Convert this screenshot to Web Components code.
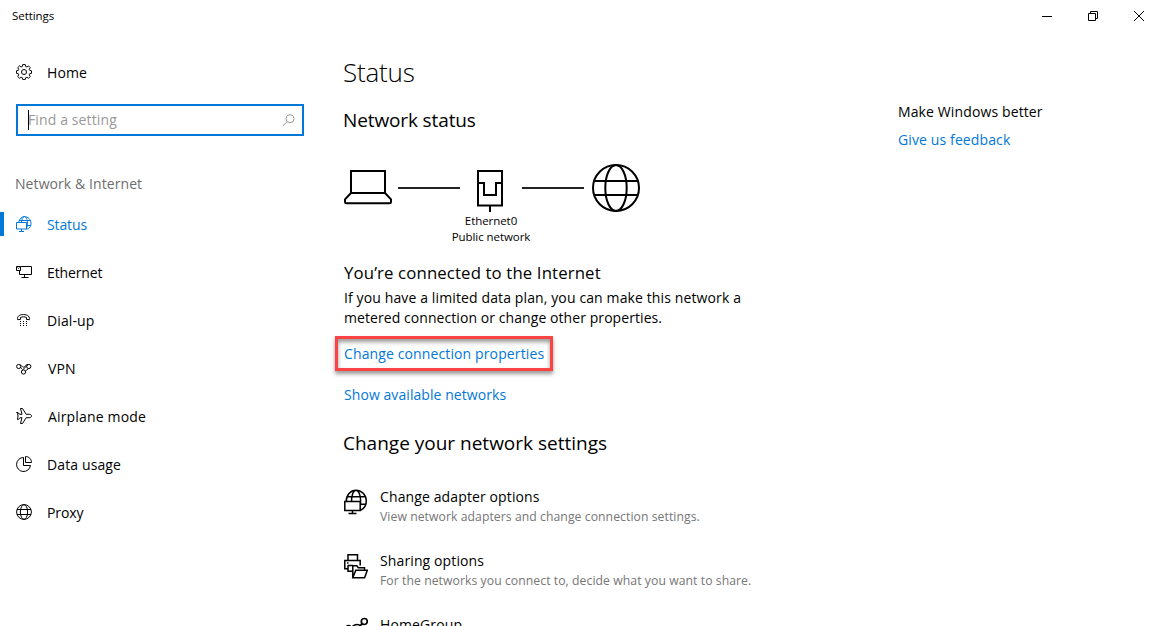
<!DOCTYPE html>
<html lang="en">
<head>
<meta charset="utf-8">
<title>Settings</title>
<style>
  html, body { margin: 0; height: 100%; overflow: hidden; background: #fff; }
</style>
</head>
<body>
<settings-app></settings-app>

<script>
// shared helper: clone a template into an open shadow root
function render(host, html) {
  const template = document.createElement("template");
  template.innerHTML = html;
  host.attachShadow({ mode: "open" });
  host.shadowRoot.appendChild(template.content.cloneNode(true));
}

const icons = {
  gear: [16, 16, `<path stroke-linejoin="round" d="M6.7 .6h2.6l.4 1.9 1.2.5 1.6-1.1 1.8 1.8-1.1 1.6.5 1.1 1.8.4v2.5l-1.8.4-.5 1.2 1.1 1.6-1.8 1.8-1.6-1.1-1.2.5-.4 1.7H6.7l-.4-1.7-1.2-.5-1.6 1.1-1.8-1.8 1.1-1.6-.5-1.2-1.8-.4V6.8l1.8-.4.5-1.1-1.1-1.6 1.8-1.8 1.6 1.1 1.2-.5z"/><circle cx="8" cy="8" r="2.5"/>`],
  status: [16, 16, `<path d="M2.600 6.500C3.400 3 5.600 .6 8.300 .6c3.800 0 6.700 3 6.700 6.700 0 3.200-1.600 5.400-4.500 6.100M3 4.500h11.300M10.500 9.500h4.200M5.400 6.500c.3-3.500 1.400-5.900 3-5.900s3.100 3 3.100 6.700c0 2.200-.2 3.400-1 4.700M.5 6.500h10v6.500H.5zM5.500 13v2.500M3 15.500h5"/>`],
  ethernet: [16, 16, `<path d="M5 2.500h10.500v8H3.500v-4M.5 2.500h4v4h-4zM1.500 3.500l1 1 1-1M8.500 10.500v3M5.500 13.500h7"/>`],
  dialup: [16, 16, `<path d="M1.500 6.500c0-2.600 2.800-4 6-4s6 1.400 6 4l-.2 1.200-2.800-.3V5.500c-1.800-.9-4.200-.9-6 0v1.900l-2.800.3z"/><path stroke-dasharray="1 2" d="M4 9.500h8M4 11.500h8M4 13.500h8"/>`],
  vpn: [16, 16, `<circle cx="2.700" cy="6.500" r="2.100"/><circle cx="12.800" cy="6.500" r="2.100"/><circle cx="7.500" cy="12" r="2.100"/><path d="M4.200 5c1.600.2 2 2.200 3.300 2.200S9.700 4.500 12 4.400M4.600 7.500l1.500 1.200M11.200 5.300L6 10.600M12.500 8.600L9.400 11"/>`],
  airplane: [16, 16, `<path d="M4.500 .5h2l3.700 5.800h3.600c2.300.5 2.300 2.900 0 3.400h-3.600l-3.700 5.800h-2l1.500-5.800H4L2.500 11.500h-1L2 8l-.5-3.500h-1 1L4 6.300h2z"/>`],
  pie: [16, 16, `<path d="M7.500 1.500A7 7 0 1 0 14.500 9.500H7.500V1.500zM9.500 .5v6h6c0-3.400-2.600-6-6-6z"/>`],
  globe: [16, 16, `<circle cx="8" cy="8" r="7.4"/><ellipse cx="8" cy="8" rx="3.600" ry="7.400"/><path d="M1 5.500h14M1 10.500h14"/>`],
  search: [13, 13, `<circle cx="8" cy="4.700" r="4"/><path d="M5.200 7.600L.6 12.200"/>`],
  minimize: [10, 10, `<path d="M0 5.500h10"/>`],
  restore: [10, 10, `<path d="M.5 2.500h7v7h-7zM2.500 2.500v-2h7v7h-2"/>`],
  close: [10, 10, `<path d="M0 0l10 10M10 0L0 10"/>`],
  laptop: [48, 48, `<path stroke-width="2" d="M7 7h34v22H7zM7 29l-6 6.300V38c0 .8.600 1.300 1.500 1.300h43c.9 0 1.500-.5 1.500-1.300v-2.700L41 29"/>`],
  port: [26, 48, `<path stroke-width="2" d="M1 7h24v34.500H1zM1 19h6v12h12V19h6M13 41.500V48"/>`],
  world: [48, 48, `<g stroke-width="2"><circle cx="24" cy="24" r="23"/><ellipse cx="24" cy="24" rx="10.700" ry="23"/><path d="M2 17h44M2 31h44"/></g>`],
  adapter: [24, 26, `<path stroke-width="1.500" d="M2.200 12.500C2.200 6 6.500 1.200 12 1.200S22.300 6 22.300 11.700c0 4.700-2.300 8.100-6 9.500M3.500 7.800h17.500M16.200 15.300h5.400M7.500 12.500C7.500 5.500 9.500 1.200 12 1.200s4.600 4.700 4.600 10.300c0 2.500-.1 4-.4 6M.8 12.500h15.400v8.900H.8zM8.500 21.400v3.100M4.500 24.500h8"/>`],
  sharing: [24, 26, `<g stroke-width="1.500"><path d="M4 7.500V1.800h9.500v5.700M4 15.700H.8V7.500h15.400v5M4 12.300v6h4.800M4 12.500h5M3 9.900h1.500"/><path fill="#fff" d="M8.800 24.700V12.800h4l1.500 1.900h6.200v2.500M8.800 24.700l3-7.500h11.500l-2.700 7.500z"/></g>`],
  homegroup: [24, 26, `<g stroke-width="1.700"><circle cx="20.300" cy="4.500" r="3"/><circle cx="13" cy="13" r="5.500"/><circle cx="4.500" cy="10.500" r="2"/><path d="M18.200 6.700l-2 1.900"/></g>`]
};

class UiIcon extends HTMLElement {
  connectedCallback() {
    const [w, h, body] = icons[this.getAttribute("name")];
    render(this, `
      <style>
        :host { display: block; flex: none; }
        svg { display: block; fill: none; stroke: currentColor; }
      </style>
      <svg width="${w}" height="${h}" viewBox="0 0 ${w} ${h}">${body}</svg>
    `);
  }
}

class TitleBar extends HTMLElement {
  constructor() {
    super();
    render(this, `
      <style>
        :host { display: flex; height: 32px; line-height: 32px; font-size: 11.500px; letter-spacing: -.05px; }
        .title { flex: 1; padding-left: 12px; }
        .button { width: 46px; display: flex; align-items: center; justify-content: center; }
      </style>
      <div class="title"><slot></slot></div>
      <div class="button"><ui-icon name="minimize"></ui-icon></div>
      <div class="button"><ui-icon name="restore"></ui-icon></div>
      <div class="button"><ui-icon name="close"></ui-icon></div>
    `);
  }
}

class NavItem extends HTMLElement {
  connectedCallback() {
    render(this, `
      <style>
        :host { display: flex; align-items: center; gap: 15px; height: 48px; padding-left: 16px; box-sizing: border-box; position: relative; }
        :host([active]) { color: #0078d7; }
        :host([active])::before { content: ""; position: absolute; left: 0; top: 12px; width: 4px; height: 24px; background: #0078d7; }
      </style>
      <ui-icon name="${this.getAttribute("icon")}"></ui-icon>
      <span><slot></slot></span>
    `);
  }
}

class SearchBox extends HTMLElement {
  constructor() {
    super();
    render(this, `
      <style>
        :host { display: flex; align-items: center; box-sizing: border-box; width: 288px; height: 32px; margin: 8px 16px 32px; padding: 0 7px 0 10px; border: 2px solid #0078d7; color: #999; }
        .caret { width: 1px; height: 20px; margin-right: -1px; background: #000; }
        .hint { flex: 1; margin-top: -2px; }
      </style>
      <div class="caret"></div>
      <div class="hint"><slot></slot></div>
      <ui-icon name="search"></ui-icon>
    `);
  }
}

class NetworkMap extends HTMLElement {
  constructor() {
    super();
    render(this, `
      <style>
        :host { display: flex; height: 97px; margin-left: 1px; font-size: 11.500px; line-height: 16px; letter-spacing: -.06px; }
        .line { width: 62px; height: 2px; margin-top: 23px; background: #222; }
        .first { margin-left: 6px; }
        .last { margin-right: 8px; }
        .adapter { width: 62px; display: flex; flex-direction: column; align-items: center; white-space: nowrap; }
        .adapter ui-icon { margin: 0 2px 1px 0; }
      </style>
      <ui-icon name="laptop"></ui-icon>
      <div class="line first"></div>
      <div class="adapter">
        <ui-icon name="port"></ui-icon>
        <slot></slot>
      </div>
      <div class="line last"></div>
      <ui-icon name="world"></ui-icon>
    `);
  }
}

class LinkText extends HTMLElement {
  constructor() {
    super();
    render(this, `
      <style>
        :host { display: block; width: max-content; line-height: 20px; color: #0078d7; position: relative; }
        :host([marked])::after { content: ""; position: absolute; left: -9px; top: -8px; width: 212px; height: 29px; border: 3px solid #fb4343; box-shadow: 0 3px 4px rgba(0,0,0,.4), inset 0 3px 4px rgba(0,0,0,.4); }
      </style>
      <slot></slot>
    `);
  }
}

class SettingRow extends HTMLElement {
  connectedCallback() {
    render(this, `
      <style>
        :host { display: flex; height: 64px; gap: 12px; margin-left: 1px; }
        ui-icon { margin-top: 2px; }
        .text { line-height: 20px; white-space: nowrap; }
        .note { font-size: 12.200px; color: #767676; letter-spacing: .07px; }
      </style>
      <ui-icon name="${this.getAttribute("icon")}"></ui-icon>
      <div class="text">
        <div><slot></slot></div>
        <div class="note"><slot name="note"></slot></div>
      </div>
    `);
  }
}

class SettingsApp extends HTMLElement {
  constructor() {
    super();
    render(this, `
      <style>
        :host { display: block; height: 626px; overflow: hidden; background: #fff; color: #000; font: 14px "Open Sans", "Noto Sans", sans-serif; letter-spacing: .12px; }
        .body { display: grid; grid-template-columns: 343px 555px 1fr; }
        nav { padding-top: 16px; }
        .group { height: 32px; line-height: 32px; padding-left: 15px; color: #6d6d6d; letter-spacing: .08px; }
        .tight { letter-spacing: -.12px; }
        .wide { letter-spacing: .16px; margin-left: 1px; }
        h1 { margin: 0; padding-top: 20px; font-size: 26px; font-weight: 300; line-height: 40px; letter-spacing: -.2px; }
        h2 { margin: 0; font-size: 19px; font-weight: 400; line-height: 28px; letter-spacing: 0; }
        h3 { margin: 0; font-size: 16.800px; font-weight: 400; line-height: 24px; letter-spacing: .12px; }
        .first { margin: 14px 0 30px; letter-spacing: -.12px; }
        .second { margin: 24px 0 30px; }
        .connection { margin-left: 1px; white-space: nowrap; }
        p { margin: 3px 0 16px; line-height: 20px; }
        .plain { letter-spacing: .07px; }
        .connection link-text + link-text { margin-top: 21px; letter-spacing: .07px; }
        aside { padding-top: 70px; line-height: 20px; }
        aside link-text { margin-top: 8px; }
      </style>
      <title-bar>Settings</title-bar>
      <div class="body">
        <nav>
          <nav-item icon="gear">Home</nav-item>
          <search-box>Find a setting</search-box>
          <div class="group">Network &amp; Internet</div>
          <nav-item icon="status" active><span class="tight">Status</span></nav-item>
          <nav-item icon="ethernet"><span class="tight">Ethernet</span></nav-item>
          <nav-item icon="dialup">Dial-up</nav-item>
          <nav-item icon="vpn"><span class="wide">VPN</span></nav-item>
          <nav-item icon="airplane"><span class="wide">Airplane mode</span></nav-item>
          <nav-item icon="pie">Data usage</nav-item>
          <nav-item icon="globe"><span class="tight">Proxy</span></nav-item>
        </nav>
        <main>
          <h1>Status</h1>
          <h2 class="first">Network status</h2>
          <network-map><span>Ethernet0</span><span>Public network</span></network-map>
          <div class="connection">
            <h3>You’re connected to the Internet</h3>
            <p>If you have a limited data plan, you can make this network a<br><span class="plain">metered connection or change other properties.</span></p>
            <link-text marked>Change connection properties</link-text>
            <link-text>Show available networks</link-text>
          </div>
          <h2 class="second">Change your network settings</h2>
          <setting-row icon="adapter">Change adapter options<span slot="note">View network adapters and change connection settings.</span></setting-row>
          <setting-row icon="sharing">Sharing options<span slot="note">For the networks you connect to, decide what you want to share.</span></setting-row>
          <setting-row icon="homegroup">HomeGroup</setting-row>
        </main>
        <aside>
          <div>Make Windows better</div>
          <link-text>Give us feedback</link-text>
        </aside>
      </div>
    `);
  }
}

customElements.define("ui-icon", UiIcon);
customElements.define("title-bar", TitleBar);
customElements.define("nav-item", NavItem);
customElements.define("search-box", SearchBox);
customElements.define("network-map", NetworkMap);
customElements.define("link-text", LinkText);
customElements.define("setting-row", SettingRow);
customElements.define("settings-app", SettingsApp);
</script>
</body>
</html>
